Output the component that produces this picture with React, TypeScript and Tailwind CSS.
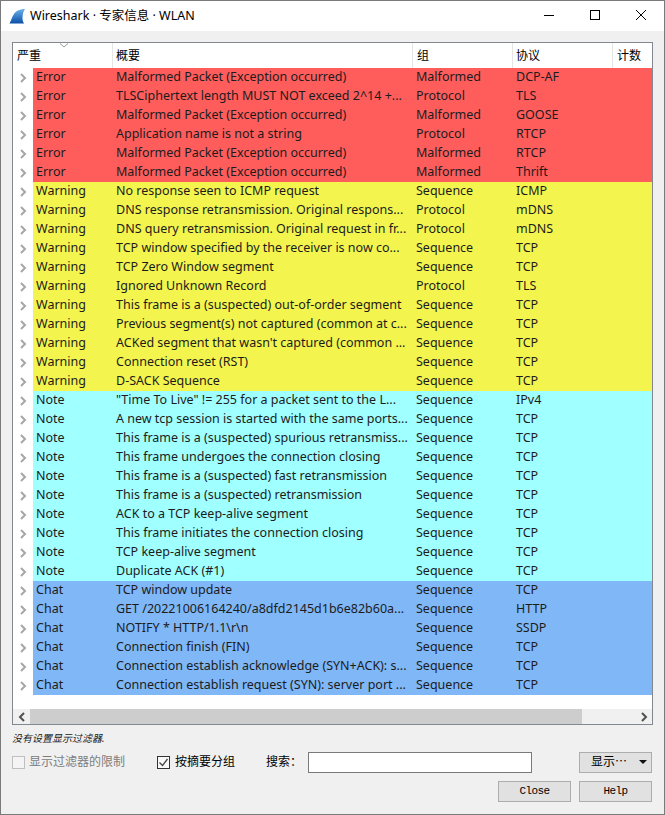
import React from 'react';

type Severity = 'Error' | 'Warning' | 'Note' | 'Chat';

const rows: [Severity, string, string, string][] = [
  ['Error', 'Malformed Packet (Exception occurred)', 'Malformed', 'DCP-AF'],
  ['Error', 'TLSCiphertext length MUST NOT exceed 2^14 +...', 'Protocol', 'TLS'],
  ['Error', 'Malformed Packet (Exception occurred)', 'Malformed', 'GOOSE'],
  ['Error', 'Application name is not a string', 'Protocol', 'RTCP'],
  ['Error', 'Malformed Packet (Exception occurred)', 'Malformed', 'RTCP'],
  ['Error', 'Malformed Packet (Exception occurred)', 'Malformed', 'Thrift'],
  ['Warning', 'No response seen to ICMP request', 'Sequence', 'ICMP'],
  ['Warning', 'DNS response retransmission. Original respons...', 'Protocol', 'mDNS'],
  ['Warning', 'DNS query retransmission. Original request in fr...', 'Protocol', 'mDNS'],
  ['Warning', 'TCP window specified by the receiver is now co...', 'Sequence', 'TCP'],
  ['Warning', 'TCP Zero Window segment', 'Sequence', 'TCP'],
  ['Warning', 'Ignored Unknown Record', 'Protocol', 'TLS'],
  ['Warning', 'This frame is a (suspected) out-of-order segment', 'Sequence', 'TCP'],
  ['Warning', 'Previous segment(s) not captured (common at c...', 'Sequence', 'TCP'],
  ['Warning', "ACKed segment that wasn't captured (common ...", 'Sequence', 'TCP'],
  ['Warning', 'Connection reset (RST)', 'Sequence', 'TCP'],
  ['Warning', 'D-SACK Sequence', 'Sequence', 'TCP'],
  ['Note', '"Time To Live" != 255 for a packet sent to the L...', 'Sequence', 'IPv4'],
  ['Note', 'A new tcp session is started with the same ports...', 'Sequence', 'TCP'],
  ['Note', 'This frame is a (suspected) spurious retransmiss...', 'Sequence', 'TCP'],
  ['Note', 'This frame undergoes the connection closing', 'Sequence', 'TCP'],
  ['Note', 'This frame is a (suspected) fast retransmission', 'Sequence', 'TCP'],
  ['Note', 'This frame is a (suspected) retransmission', 'Sequence', 'TCP'],
  ['Note', 'ACK to a TCP keep-alive segment', 'Sequence', 'TCP'],
  ['Note', 'This frame initiates the connection closing', 'Sequence', 'TCP'],
  ['Note', 'TCP keep-alive segment', 'Sequence', 'TCP'],
  ['Note', 'Duplicate ACK (#1)', 'Sequence', 'TCP'],
  ['Chat', 'TCP window update', 'Sequence', 'TCP'],
  ['Chat', 'GET /20221006164240/a8dfd2145d1b6e82b60a...', 'Sequence', 'HTTP'],
  ['Chat', 'NOTIFY * HTTP/1.1\\r\\n', 'Sequence', 'SSDP'],
  ['Chat', 'Connection finish (FIN)', 'Sequence', 'TCP'],
  ['Chat', 'Connection establish acknowledge (SYN+ACK): s...', 'Sequence', 'TCP'],
  ['Chat', 'Connection establish request (SYN): server port ...', 'Sequence', 'TCP'],
];

const severityBg: Record<Severity, string> = {
  Error: 'bg-[#ff5c5c]',
  Warning: 'bg-[#f4f44f]',
  Note: 'bg-[#a0ffff]',
  Chat: 'bg-[#80b7f7]',
};

function Arrow({ color, left }: { color: string; left?: boolean }) {
  return (
    <svg width="8" height="10" viewBox="0 0 8 10">
      <path d={left ? 'M6 1 L2 5 L6 9' : 'M2 1 L6 5 L2 9'} fill="none" stroke={color} strokeWidth="2" />
    </svg>
  );
}

function HeaderCell({ label, className }: { label: string; className: string }) {
  return <div className={`flex h-full items-center border-r border-[#e5e5e5] ${className}`}>{label}</div>;
}

function Row({ row }: { row: [Severity, string, string, string] }) {
  const [severity, summary, group, protocol] = row;
  return (
    <div className="flex h-[19px] items-center whitespace-nowrap text-[#1c1c1c]">
      <div className="flex w-5 justify-center">
        <Arrow color="#a6a6a6" />
      </div>
      <div className={`flex h-full flex-1 items-center ${severityBg[severity]}`}>
        <div className="w-[80px] pl-[3px]">{severity}</div>
        <div className="w-[300px] pl-[3px]">{summary}</div>
        <div className="w-[100px] pl-[3px]">{group}</div>
        <div className="w-[100px] pl-[3px]">{protocol}</div>
      </div>
    </div>
  );
}

export default function App() {
  return (
    <div className="flex h-[815px] w-[665px] flex-col border border-[#7a7a7a] bg-[#f0f0f0] font-['Noto_Sans','Noto_Sans_CJK_SC',sans-serif] text-[12.5px] text-black">
      {/* Title bar */}
      <div className="flex h-[30px] shrink-0 items-center bg-white pl-2">
        <svg width="17" height="16" viewBox="0 0 17 16">
          <defs>
            <linearGradient id="fin" x1="0" y1="0" x2="0" y2="1">
              <stop offset="0" stopColor="#6cb2ea" />
              <stop offset="1" stopColor="#0a4fa8" />
            </linearGradient>
          </defs>
          <path d="M0.5 15.5 C3 11 4 5 8 3 C10.5 1.5 13.5 1 16 1 C14 4 13.5 7 13.5 10 C13.5 12 14 14 15 15.5 Z" fill="url(#fin)" />
        </svg>
        <span className="ml-[4px] text-[12.5px]">Wireshark · 专家信息 · WLAN</span>
        <div className="ml-auto flex items-center">
          <svg width="46" height="30" viewBox="0 0 46 30"><path d="M18 14.5 H28" stroke="#000" /></svg>
          <svg width="46" height="30" viewBox="0 0 46 30"><rect x="18.5" y="9.5" width="9" height="9" fill="none" stroke="#000" /></svg>
          <svg width="46" height="30" viewBox="0 0 46 30"><path d="M18 9 L28 19 M28 9 L18 19" stroke="#000" /></svg>
        </div>
      </div>

      <div className="flex flex-1 flex-col px-[11px] pt-[11px]">
        {/* Tree table */}
        <div className="flex h-[683px] w-[641px] flex-col border border-[#828790] bg-white">
          <div className="relative flex h-[25px] shrink-0 items-center text-[12px] text-black">
            <HeaderCell label="严重" className="w-[100px] pl-[4px]" />
            <HeaderCell label="概要" className="w-[300px] pl-[3px]" />
            <HeaderCell label="组" className="w-[100px] pl-[4px]" />
            <HeaderCell label="协议" className="w-[100px] pl-[3px]" />
            <div className="pl-[4px]">计数</div>
            <svg width="10" height="5" viewBox="0 0 10 5" className="absolute left-[46px] top-0">
              <path d="M1 0.5 L5 4 L9 0.5" fill="none" stroke="#9a9a9a" />
            </svg>
          </div>
          <div className="flex-1">
            {rows.map((row, i) => (
              <Row key={i} row={row} />
            ))}
          </div>
          {/* Horizontal scrollbar */}
          <div className="flex h-[15px] shrink-0 items-center bg-[#f0f0f0]">
            <div className="flex w-[17px] justify-center"><Arrow color="#505050" left /></div>
            <div className="h-full w-[552px] bg-[#cdcdcd]" />
            <div className="ml-auto flex w-[17px] justify-center"><Arrow color="#505050" /></div>
          </div>
        </div>

        <div className="mt-[6px] h-[14px] text-[10px] italic leading-[14px] text-[#222]">没有设置显示过滤器.</div>

        {/* Filter options */}
        <div className="mt-[6px] flex h-[22px] items-center whitespace-nowrap text-[12px]">
          <div className="h-[13px] w-[13px] border border-[#bfbfbf] bg-[#f4f4f4]" />
          <span className="ml-[4px] w-[128px] text-[#7d7d7d]">显示过滤器的限制</span>
          <div className="flex h-[13px] w-[13px] items-center justify-center border border-[#333] bg-[#f8f8f8]">
            <svg width="11" height="11" viewBox="0 0 11 11">
              <path d="M1.5 5.5 L4.5 8.5 L9.5 2" fill="none" stroke="#444" strokeWidth="1.3" />
            </svg>
          </div>
          <span className="ml-[5px] w-[60px]">按摘要分组</span>
          <span className="ml-[31px] w-[42px]">搜索：</span>
          <div className="h-[21px] w-[224px] border border-[#7a7a7a] bg-white" />
          <div className="ml-[47px] flex h-[21px] w-[73px] items-center border border-[#adadad] bg-[#e1e1e1] pl-[11px]">
            显示⋯
            <svg width="8" height="4" viewBox="0 0 8 4" className="ml-auto mr-[4px]"><path d="M0 0 H8 L4 4 Z" fill="#111" /></svg>
          </div>
        </div>

        {/* Dialog buttons */}
        <div className="mt-[8px] flex justify-end gap-[8px] pr-[1px]">
          <div className="flex h-[21px] w-[73px] items-center justify-center border border-[#adadad] bg-[#e1e1e1] font-['Liberation_Mono',monospace] text-[11px] tracking-[-0.6px]">Close</div>
          <div className="flex h-[21px] w-[73px] items-center justify-center border border-[#adadad] bg-[#e1e1e1] font-['Liberation_Mono',monospace] text-[11px] tracking-[-0.6px]">Help</div>
        </div>
      </div>
    </div>
  );
}
